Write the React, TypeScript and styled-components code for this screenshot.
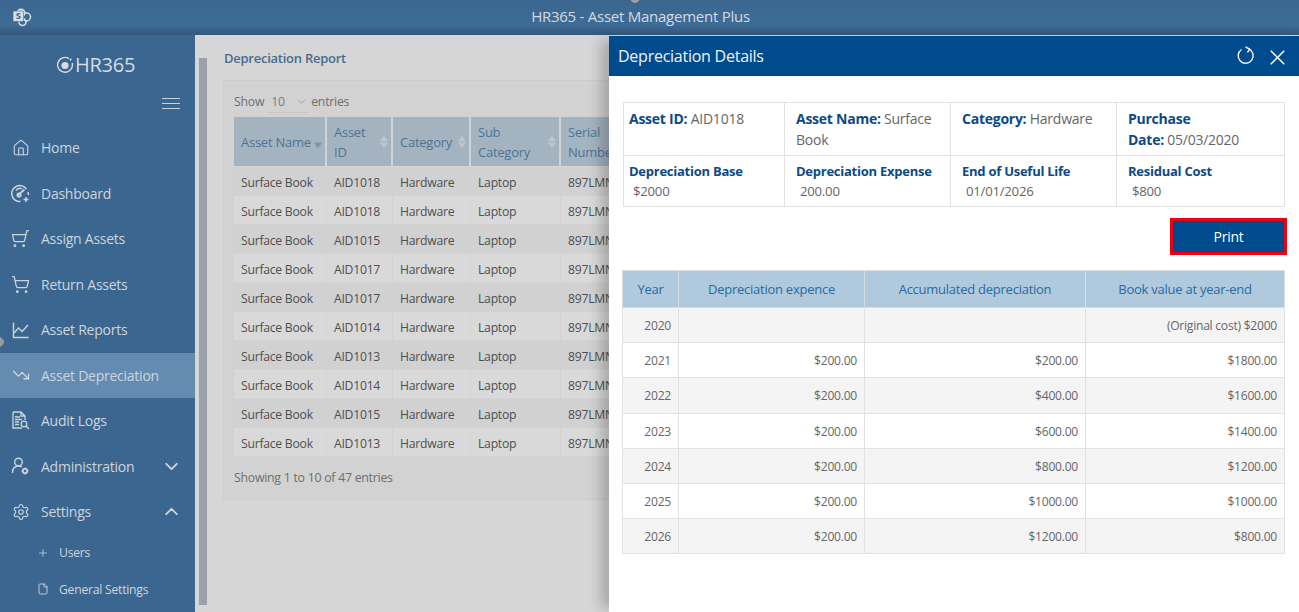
import React from 'react';
import styled, { createGlobalStyle } from 'styled-components';
import { ChevronDown, ChevronUp, File, House, Plus, Settings, ShoppingCart, TrendingDown, X } from 'lucide-react';

const GlobalStyle = createGlobalStyle`
  html, body { margin: 0; padding: 0; height: 100%; }
  body { font-family: "Open Sans", "Liberation Sans", sans-serif; letter-spacing: -0.25px; overflow: hidden; background: #d6d6d6; }
  * { box-sizing: border-box; }
`;

const Page = styled.div`
  position: relative;
  width: 1299px;
  height: 612px;
  overflow: hidden;
  display: flex;
  flex-direction: column;
`;

const TopBar = styled.header`
  height: 35px;
  flex: none;
  display: flex;
  align-items: center;
  padding-left: 12px;
  background: linear-gradient(#3a668f 0%, #3f6c95 70%, #33587b 100%);
  color: #d3dbe2;
`;

const TopTitle = styled.div`
  flex: 1;
  text-align: center;
  font-size: 15px;
  padding-right: 50px;
  margin-top: -3px;
`;

const Body = styled.div`
  flex: 1;
  display: flex;
  min-height: 0;
`;

const Sidebar = styled.aside`
  width: 195px;
  flex: none;
  background: #3b668f;
  color: #ccd5dd;
  display: flex;
  flex-direction: column;
`;

const Logo = styled.div`
  height: 59px;
  display: flex;
  align-items: center;
  justify-content: center;
  gap: 1px;
  padding-right: 4px;
  font-size: 20px;
  color: #d5dce3;
`;

const Burger = styled.div`
  align-self: flex-end;
  margin: 4px 15px 0 0;
  width: 18px;
  height: 11px;
  border-top: 1px solid #c8d2db;
  border-bottom: 1px solid #c8d2db;
  position: relative;
  &::after {
    content: '';
    position: absolute;
    left: 0;
    right: 0;
    top: 4px;
    height: 1px;
    background: #c8d2db;
  }
`;

const Nav = styled.nav`
  margin-top: 16px;
  display: flex;
  flex-direction: column;
`;

const NavItem = styled.div<{ $active?: boolean }>`
  height: 45.5px;
  display: flex;
  align-items: center;
  padding: 0 13px 0 12px;
  font-size: 14px;
  background: ${(p) => (p.$active ? '#648bb0' : 'transparent')};
  svg { flex: none; }
`;

const NavIcon = styled.span<{ $flip?: boolean }>`
  width: 17px;
  height: 19px;
  display: flex;
  align-items: center;
  justify-content: center;
  transform: ${(p) => (p.$flip ? 'scaleX(-1)' : 'none')};
`;

const NavLabel = styled.span`
  flex: 1;
  margin-left: 12px;
`;

const SubItem = styled.div`
  height: 37px;
  margin-top: -0.5px;
  display: flex;
  align-items: center;
  padding-left: 37px;
  font-size: 12.2px;
  gap: 10px;
`;

const Main = styled.main`
  flex: 1;
  display: flex;
  min-width: 0;
  padding: 23px 0 7px 4px;
  background: #d6d6d6;
`;

const ScrollStrip = styled.div`
  width: 8px;
  flex: none;
  background: #9aa1a8;
`;

const Content = styled.div`
  flex: 1;
  min-width: 0;
  margin-left: 16px;
`;

const PageTitle = styled.div`
  font-size: 13px;
  font-weight: 600;
  color: #466c8f;
  line-height: 18px;
  margin-top: -9px;
  padding-left: 1px;
`;

const Panel = styled.section`
  margin-top: 13px;
  height: 420px;
  background: #d2d2d2;
  border: 1px solid #cdcdcd;
  border-right: 0;
  padding: 7px 0 0 10px;
`;

const LengthRow = styled.div`
  height: 26px;
  margin-bottom: 3px;
  display: flex;
  align-items: center;
  font-size: 12.3px;
  color: #6e6e6e;
`;

const LengthSelect = styled.div`
  width: 40px;
  height: 23px;
  margin: 0 3px 0 4px;
  display: flex;
  align-items: center;
  justify-content: space-between;
  border-bottom: 1px solid #c8c8c8;
  padding: 2px 0 0 3px;
  color: #7d7d7d;
`;

const ReportTable = styled.table`
  table-layout: fixed;
  width: 402px;
  border-collapse: separate;
  border-spacing: 0;
  font-size: 12.2px;
  color: #4f4f4f;
`;

const ReportHead = styled.th<{ $w: number }>`
  width: ${(p) => p.$w}px;
  height: 49px;
  padding: 0 12px 0 7px;
  background: #a4b3c0;
  color: #4f7394;
  border-right: 2px solid #d2d2d2;
  font-size: 13px;
  font-weight: 400;
  text-align: left;
  line-height: 20px;
  position: relative;
`;

const SortMark = styled.span<{ $only?: boolean }>`
  position: absolute;
  right: 3px;
  top: 50%;
  transform: translateY(-50%);
  display: flex;
  flex-direction: column;
  gap: 1px;
  &::before, &::after {
    content: '';
    width: 0;
    height: 0;
    border-left: 4.5px solid transparent;
    border-right: 4.5px solid transparent;
  }
  &::before { border-bottom: 6px solid ${(p) => (p.$only ? 'transparent' : '#bcc6cf')}; }
  &::after { border-top: 6px solid ${(p) => (p.$only ? '#7d94aa' : '#bcc6cf')}; }
`;

const ReportRow = styled.tr<{ $odd: boolean }>`
  height: 29px;
  background: ${(p) => (p.$odd ? '#d1d1d1' : '#d9d9d9')};
`;

const ReportCell = styled.td`
  padding: 2px 7px 0;
  white-space: nowrap;
  overflow: hidden;
  border-right: 1px solid #d2d2d2;
  border-top: 1px solid #d4d4d4;
`;

const Footer = styled.div`
  margin-top: 13px;
  font-size: 12.3px;
  color: #6e6e6e;
`;

const Drawer = styled.aside`
  position: absolute;
  left: 609px;
  top: 36px;
  right: 0;
  bottom: 0;
  background: #fff;
  box-shadow: -12px 0 12px -4px rgba(0, 0, 0, 0.22);
  display: flex;
  flex-direction: column;
`;

const DrawerHead = styled.div`
  height: 40px;
  flex: none;
  display: flex;
  align-items: center;
  padding: 0 9px 0 9px;
  background: #004b8d;
  color: #eef3f7;
`;

const DrawerTitle = styled.div`
  flex: 1;
  font-size: 16px;
  margin-top: -1px;
`;

const DrawerBody = styled.div`
  flex: 1;
  padding: 26px 12px 0 13px;
`;

const InfoGrid = styled.div`
  width: 662px;
  height: 105px;
  margin-left: 1px;
  display: grid;
  grid-template-columns: 161px 166px 166px 1fr;
  grid-template-rows: 53px 1fr;
  border: 1px solid #e2e2e2;
`;

const InfoCell = styled.div<{ $last?: boolean; $bottom?: boolean }>`
  padding: ${(p) => (p.$bottom ? '6px' : '5px')} 5px 0 11px;
  font-size: 14px;
  line-height: 21px;
  color: #666;
  border-right: ${(p) => (p.$last ? '0' : '1px solid #e2e2e2')};
  border-bottom: ${(p) => (p.$bottom ? '0' : '1px solid #e2e2e2')};
  &:nth-child(4n + 1) { padding-left: 5px; }
`;

const InfoLabel = styled.strong`
  font-weight: 700;
  color: #0b4a87;
`;

const InfoBlockLabel = styled(InfoLabel)`
  display: block;
  font-size: 13px;
  line-height: 19px;
`;

const InfoValue = styled.div`
  padding-left: 4px;
  font-size: 13.2px;
  line-height: 20px;
`;

const Actions = styled.div`
  display: flex;
  justify-content: flex-end;
  margin-top: 11px;
`;

const PrintButton = styled.button`
  width: 117px;
  height: 37px;
  padding: 0;
  background: #004b8d;
  color: #fff;
  border: 3px solid #ee0011;
  font-family: inherit;
  letter-spacing: inherit;
  font-size: 14px;
`;

const DetailTable = styled.table`
  table-layout: fixed;
  width: 662px;
  margin-top: 15px;
  border-collapse: collapse;
  font-size: 12.1px;
  color: #666;
`;

const DetailHead = styled.th<{ $w: number }>`
  width: ${(p) => p.$w}px;
  height: 37px;
  background: #b0c9dd;
  border: 1px solid #d7dee4;
  color: #2a6a9e;
  font-size: 13px;
  font-weight: 400;
`;

const DetailRow = styled.tr<{ $shade: boolean }>`
  height: 35.2px;
  background: ${(p) => (p.$shade ? '#f4f4f4' : '#fff')};
`;

const DetailCell = styled.td`
  border: 1px solid #e2e2e2;
  padding: 1px 7px 0 6px;
  text-align: right;
`;

const EdgeDot = styled.span<{ $x: number; $y: number; $ring?: boolean }>`
  position: absolute;
  left: ${(p) => p.$x}px;
  top: ${(p) => p.$y}px;
  width: 10px;
  height: 10px;
  border-radius: 50%;
  background: ${(p) => (p.$ring ? '#fff' : '#9c9c9c')};
  border: 1px solid ${(p) => (p.$ring ? '#777' : '#9c9c9c')};
`;

const DashIcon = () => (
  <svg width="19" height="19" viewBox="0 0 19 19" fill="none" stroke="currentColor" strokeWidth="1.5">
    <path d="M15.5 5.2A8 8 0 1 0 9.5 17.5" />
    <path d="M5 6.5A5 5 0 0 1 11 4.7" />
    <path d="M6.5 11.5 13.5 5.5" strokeWidth="1.8" />
    <circle cx="8" cy="11" r="1.8" />
    <path d="M15 13v5M12.5 15.5h5" />
    <path d="M17 8a8 8 0 0 1 .4 3" />
  </svg>
);

const ReportIcon = () => (
  <svg width="18" height="18" viewBox="0 0 18 18" fill="none" stroke="currentColor" strokeWidth="1.4">
    <path d="M1.5 1.5v15h15" />
    <path d="M2 12l4.5-5 3.5 3.5L16 4" />
  </svg>
);

const AuditIcon = () => (
  <svg width="19" height="19" viewBox="0 0 19 19" fill="none" stroke="currentColor" strokeWidth="1.3">
    <path d="M2 1h8l4 4v4M2 1v16h9M10 1v4h4" />
    <path d="M4 6h5M4 8.500h7M4 11h4M4 13.500h4" strokeWidth="1.6" />
    <circle cx="13" cy="13" r="2.8" />
    <path d="M15 15l3 3" strokeWidth="1.6" />
  </svg>
);

const AdminIcon = () => (
  <svg width="19" height="19" viewBox="0 0 19 19" fill="none" stroke="currentColor" strokeWidth="1.4">
    <circle cx="7.500" cy="5" r="3.8" />
    <path d="M1.500 16c0-4.500 2.500-7 6-7 1.500 0 2.500.4 3.500 1" />
    <circle cx="14" cy="14" r="2" />
    <path d="M14 10.500v1.500M14 16v1.500M10.500 14H12M16 14h1.500M11.600 11.600l1 1M15.400 15.400l1 1M16.400 11.600l-1 1M12.600 15.400l-1 1" strokeWidth="1.5" />
  </svg>
);

const RefreshIcon = () => (
  <svg width="19" height="19" viewBox="0 0 19 19" fill="none" stroke="currentColor" strokeWidth="1.5" style={{ marginRight: 10, marginTop: -2 }}>
    <path d="M5.500 3.500A7.500 7.500 0 1 0 13 3" />
    <path d="M9.500 0.800 13.500 3 11.500 6.500" />
  </svg>
);

const SharePointLogo = () => (
  <svg width="20" height="20" viewBox="0 0 20 20" style={{ marginTop: -2 }}>
    <circle cx="9" cy="6" r="4.5" fill="#d8dfe5" />
    <circle cx="14.500" cy="10" r="4" fill="none" stroke="#d8dfe5" strokeWidth="1.500" />
    <circle cx="10.500" cy="15" r="3.500" fill="none" stroke="#d8dfe5" strokeWidth="1.500" />
    <rect x="1" y="4" width="10.500" height="10.500" rx="1" fill="#d8dfe5" stroke="#3b668f" strokeWidth="0.600" />
    <text x="6.200" y="12.300" fontSize="9.500" fontWeight="700" textAnchor="middle" fill="#3b668f" fontFamily="Open Sans">S</text>
  </svg>
);

const LogoMark = () => (
  <svg width="18" height="18" viewBox="0 0 18 18">
    <path d="M13 2.600A7.400 7.400 0 1 0 16.200 7" fill="none" stroke="#d5dce3" strokeWidth="1.400" />
    <circle cx="9" cy="9.500" r="3.600" fill="#d5dce3" />
    <circle cx="14.600" cy="3.600" r="1.100" fill="#d5dce3" />
  </svg>
);

const cart = <ShoppingCart size={19} strokeWidth={1.6} />;

const items: { label: string; icon: React.ReactNode; flip?: boolean; active?: boolean; Chevron?: typeof ChevronDown }[] = [
  { label: 'Home', icon: <House size={18} strokeWidth={1.5} /> },
  { label: 'Dashboard', icon: <DashIcon /> },
  { label: 'Assign Assets', icon: cart, flip: true },
  { label: 'Return Assets', icon: cart },
  { label: 'Asset Reports', icon: <ReportIcon /> },
  { label: 'Asset Depreciation', icon: <TrendingDown size={18} strokeWidth={1.8} />, active: true },
  { label: 'Audit Logs', icon: <AuditIcon /> },
  { label: 'Administration', icon: <AdminIcon />, Chevron: ChevronDown },
  { label: 'Settings', icon: <Settings size={18} strokeWidth={1.5} />, Chevron: ChevronUp },
];

const reportHeads = [
  { text: 'Asset Name', w: 93, only: true },
  { text: 'Asset ID', w: 66 },
  { text: 'Category', w: 78 },
  { text: 'Sub Category', w: 90 },
  { text: 'Serial Number', w: 75, noSort: true },
];

const assetIds = ['AID1018', 'AID1018', 'AID1015', 'AID1017', 'AID1017', 'AID1014', 'AID1013', 'AID1014', 'AID1015', 'AID1013'];

const schedule = [
  ['2020', '', '', '(Original cost) $2000'],
  ['2021', '$200.00', '$200.00', '$1800.00'],
  ['2022', '$200.00', '$400.00', '$1600.00'],
  ['2023', '$200.00', '$600.00', '$1400.00'],
  ['2024', '$200.00', '$800.00', '$1200.00'],
  ['2025', '$200.00', '$1000.00', '$1000.00'],
  ['2026', '$200.00', '$1200.00', '$800.00'],
];

export default function App() {
  return (
    <Page>
      <GlobalStyle />
      <TopBar>
        <SharePointLogo />
        <TopTitle>HR365 - Asset Management Plus</TopTitle>
      </TopBar>
      <Body>
        <Sidebar>
          <Logo><LogoMark />HR365</Logo>
          <Burger />
          <Nav>
            {items.map(({ label, icon, flip, Chevron, active }) => (
              <NavItem key={label} $active={active}>
                <NavIcon $flip={flip}>{icon}</NavIcon>
                <NavLabel>{label}</NavLabel>
                {Chevron && <Chevron size={21} strokeWidth={2.2} />}
              </NavItem>
            ))}
            <SubItem><Plus size={12} strokeWidth={1.5} />Users</SubItem>
            <SubItem><File size={12} strokeWidth={1.8} />General Settings</SubItem>
          </Nav>
        </Sidebar>
        <Main>
          <ScrollStrip />
          <Content>
            <PageTitle>Depreciation Report</PageTitle>
            <Panel>
              <LengthRow>
                Show
                <LengthSelect>10 <ChevronDown size={13} strokeWidth={1} /></LengthSelect>
                entries
              </LengthRow>
              <ReportTable>
                <thead>
                  <tr>
                    {reportHeads.map((h) => (
                      <ReportHead key={h.text} $w={h.w}>
                        {h.text}
                        {!h.noSort && <SortMark $only={h.only} />}
                      </ReportHead>
                    ))}
                  </tr>
                </thead>
                <tbody>
                  {assetIds.map((id, i) => (
                    <ReportRow key={i} $odd={i % 2 === 0}>
                      <ReportCell>Surface Book</ReportCell>
                      <ReportCell>{id}</ReportCell>
                      <ReportCell>Hardware</ReportCell>
                      <ReportCell>Laptop</ReportCell>
                      <ReportCell>897LMNOP</ReportCell>
                    </ReportRow>
                  ))}
                </tbody>
              </ReportTable>
              <Footer>Showing 1 to 10 of 47 entries</Footer>
            </Panel>
          </Content>
        </Main>
      </Body>
      <EdgeDot $x={-6} $y={337} />
      <EdgeDot $x={630} $y={-7} />
      <EdgeDot $x={1293} $y={338} $ring />
      <Drawer>
        <DrawerHead>
          <DrawerTitle>Depreciation Details</DrawerTitle>
          <RefreshIcon />
          <X size={25} strokeWidth={1.6} style={{ marginTop: 3 }} />
        </DrawerHead>
        <DrawerBody>
          <InfoGrid>
            <InfoCell><InfoLabel>Asset ID:</InfoLabel> AID1018</InfoCell>
            <InfoCell><InfoLabel>Asset Name:</InfoLabel> Surface Book</InfoCell>
            <InfoCell><InfoLabel>Category:</InfoLabel> Hardware</InfoCell>
            <InfoCell $last><InfoLabel>Purchase<br />Date:</InfoLabel> 05/03/2020</InfoCell>
            <InfoCell $bottom><InfoBlockLabel>Depreciation Base</InfoBlockLabel><InfoValue>$2000</InfoValue></InfoCell>
            <InfoCell $bottom><InfoBlockLabel>Depreciation Expense</InfoBlockLabel><InfoValue>200.00</InfoValue></InfoCell>
            <InfoCell $bottom><InfoBlockLabel>End of Useful Life</InfoBlockLabel><InfoValue>01/01/2026</InfoValue></InfoCell>
            <InfoCell $bottom $last><InfoBlockLabel>Residual Cost</InfoBlockLabel><InfoValue>$800</InfoValue></InfoCell>
          </InfoGrid>
          <Actions><PrintButton>Print</PrintButton></Actions>
          <DetailTable>
            <thead>
              <tr>
                <DetailHead $w={56}>Year</DetailHead>
                <DetailHead $w={186}>Depreciation expence</DetailHead>
                <DetailHead $w={221}>Accumulated depreciation</DetailHead>
                <DetailHead $w={199}>Book value at year-end</DetailHead>
              </tr>
            </thead>
            <tbody>
              {schedule.map((row, i) => (
                <DetailRow key={row[0]} $shade={i % 2 === 0}>
                  {row.map((v, j) => <DetailCell key={j}>{v}</DetailCell>)}
                </DetailRow>
              ))}
            </tbody>
          </DetailTable>
        </DrawerBody>
      </Drawer>
    </Page>
  );
}
